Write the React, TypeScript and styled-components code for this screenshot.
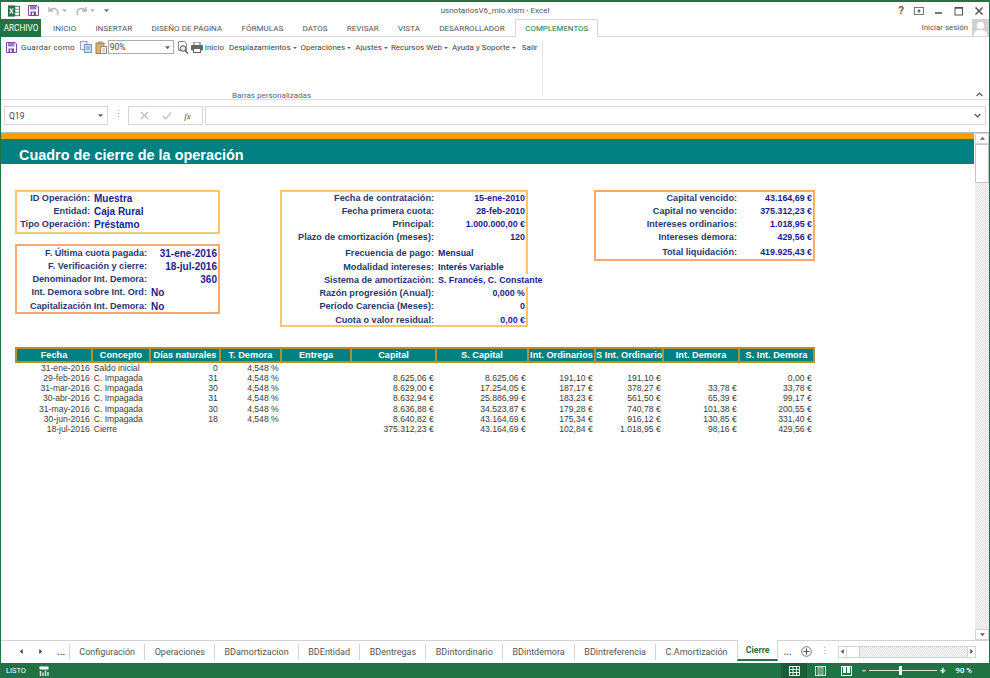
import React from "react";
import styled, { createGlobalStyle } from "styled-components";

const Global = createGlobalStyle`
  html, body { margin: 0; padding: 0; background: #fff; }
  body { width: 990px; height: 678px; overflow: hidden; }
  * { box-sizing: border-box; }
`;

const UI = `Roboto, "Open Sans", sans-serif`;
const CELL = `"Liberation Sans", Arial, sans-serif`;

const Window = styled.div`
  width: 990px; height: 678px; display: flex; flex-direction: column;
  border: 1px solid #217346; border-top-width: 2px; border-bottom: 0;
  background: #fff; font-family: ${UI}; color: #444; font-size: 8.5px;
`;
const TitleBar = styled.div`
  height: 17px; display: grid; grid-template-columns: 1fr auto 1fr; align-items: center;
`;
const Quick = styled.div`display: flex; align-items: center; padding-left: 6px;`;
const Title = styled.div`font-size: 8px; color: #555;`;
const WinCtl = styled.div`display: flex; justify-content: flex-end; gap: 10px; padding-right: 5px; align-items: center;`;

const Tabs = styled.div`
  height: 18px; display: flex; align-items: stretch; border-bottom: 1px solid #d8d8d8;
`;
const FileTab = styled.div`
  width: 40px; margin-bottom: -1px; background: #217346; color: #fff; font-size: 8.2px;
  display: flex; align-items: center; justify-content: center;
`;
const Tab = styled.div<{ $active?: boolean }>`
  display: flex; align-items: center; padding: 0 9.6px; font-size: 8.1px; white-space: nowrap; color: #555;
  ${p => p.$active && `
    width: 83px; margin-left: 1px; padding: 0; justify-content: center; font-size: 7.9px; color: #217346;
    border: 1px solid #d8d8d8; border-bottom: 0; background: #fff; margin-bottom: -1px;
  `}
`;
const TabList = styled.div`display: flex; padding-left: 2.4px; flex: 1;`;
const SignIn = styled.div`display: flex; align-items: center; gap: 4px; font-size: 7.9px; color: #555;`;

const Ribbon = styled.div`
  height: 63px; display: flex; border-bottom: 1px solid #dcdcdc; position: relative;
`;
const Group = styled.div`
  width: 542px; margin-top: 3px; margin-bottom: 3px; border-right: 1px solid #e4e4e4;
  display: flex; flex-direction: column; justify-content: space-between;
`;
const GroupRow = styled.div`display: flex; align-items: center; height: 14px; padding-left: 5px;`;
const GroupLabel = styled.div`text-align: center; font-size: 8px; color: #666; line-height: 10px; margin-bottom: -5px;`;
const RBtn = styled.span<{ $gap?: number; $wide?: boolean }>`
  display: inline-flex; align-items: center; white-space: nowrap; font-size: 8px; color: #444; flex: none;
  margin-left: ${p => p.$gap ?? 0}px;
  ${p => p.$wide && `letter-spacing: .25px;`}
`;
const Caret = styled.i`
  display: inline-block; width: 0; height: 0; margin-left: 2px; margin-top: 1px;
  border-left: 2px solid transparent; border-right: 2px solid transparent; border-top: 2.5px solid #666;
`;
const Combo = styled.div`
  width: 66px; height: 14px; flex: none; border: 1px solid #ababab; margin-left: 1px; display: flex;
  align-items: center; justify-content: space-between; padding: 0 3px 0 1px; font-size: 8.5px; color: #444;
`;
const Collapse = styled.div`position: absolute; right: 6px; bottom: 2px; line-height: 0;`;

const FormulaBar = styled.div`
  height: 32px; display: flex; align-items: flex-start; padding: 6px 3px 0 3px;
`;
const FBox = styled.div<{ $w?: number; $grow?: boolean }>`
  height: 19px; border: 1px solid #d6d6d6; background: #fff; display: flex; align-items: center;
  ${p => p.$w && `width: ${p.$w}px;`} ${p => p.$grow && `flex: 1; margin-left: 2px; justify-content: flex-end; padding-right: 4px;`}
`;
const NameText = styled.span`flex: 1; padding-left: 4px; font-size: 8.5px; color: #444;`;
const Dots = styled.div<{ $w?: number }>`width: ${p => p.$w ?? 20}px; flex: none; text-align: center; color: #999; font-size: 9px; line-height: 17px;`;
const FIcons = styled.div`display: flex; flex: 1; justify-content: space-around; align-items: center; padding: 0 5px;`;
const Fx = styled.span`font-family: "Liberation Serif", serif; font-style: italic; font-size: 9px; color: #555;`;

const SheetArea = styled.div`
  height: 509px; display: flex; border-top: 1px solid #b8b8b8; border-bottom: 1px solid #d4d4d4;
`;
const Sheet = styled.div`flex: 1; min-width: 0; overflow: hidden; font-family: ${CELL};`;
const OrangeBar = styled.div`height: 6px; background: #ff9c00;`;
const Banner = styled.div`
  height: 25px; background: #008080; color: #fff; font-weight: 700; font-size: 14.45px;
  display: flex; align-items: center; padding-left: 18px; padding-top: 7px;
`;
const Panels = styled.div`
  display: grid; grid-template-columns: 205px 248px 221px; column-gap: 60px;
  padding: 26px 0 0 14px; align-items: start;
`;
const LeftCol = styled.div`display: flex; flex-direction: column; gap: 10px;`;
const Box = styled.div<{ $tone: "light" | "salmon"; $cols: string; $shift?: boolean; $tall?: number; $row5?: number; $nudge?: boolean }>`
  border: 2px solid ${p => (p.$tone === "light" ? "#ffc66e" : "#ffa76c")};
  display: grid; grid-template-columns: ${p => p.$cols}; grid-auto-rows: 13.25px; align-items: end;
  ${p => p.$shift && `margin-left: 6px; width: 221px;`}
  ${p => p.$tall && `height: ${p.$tall}px; grid-template-rows: repeat(4, 13.2px) ${p.$row5}px;`}
  ${p => p.$nudge && `padding-top: 1px; height: 70px;`}
`;
const Label = styled.div`
  text-align: right; font-weight: 700; font-size: 9.15px; line-height: 13.3px; color: #1f3a72;
  white-space: nowrap; padding-right: 3px;
`;
const Value = styled.div<{ $left?: boolean; $over?: boolean; $big?: boolean }>`
  font-weight: 700; font-size: ${p => (p.$big ? "10px" : "8.9px")}; line-height: 13.3px; color: #1c1c8e; white-space: nowrap;
  text-align: ${p => (p.$left ? "left" : "right")};
  padding: ${p => (p.$left ? "0 0 0 1px" : "0 1px 0 0")};
  ${p => p.$over && `background: #fff; width: max-content; padding-right: 1px; margin-right: -30px;`}
`;
const Table = styled.div`margin: 20px 0 0 14px; width: 800px;`;
const HeadRow = styled.div`
  display: grid; grid-template-columns: 74px 58px 70px 61px 70px 85px 92px 67px 68px 76px 75px; height: 16px;
  border: 2px solid #b0912e; background: #008080;
`;
const HeadCell = styled.div`
  border-left: 2px solid #b0912e; color: #fff; font-weight: 700; font-size: 9.2px;
  text-align: center; line-height: 12px; white-space: nowrap; overflow: hidden;
  &:first-child { border-left: 0; }
`;
const BodyRow = styled.div`
  display: grid; grid-template-columns: 76px 58px 70px 61px 70px 85px 92px 67px 68px 76px 75px; height: 10.3px;
  &:nth-child(2) { margin-top: -0.5px; }
`;
const BodyCell = styled.div<{ $left?: boolean }>`
  font-size: 8.6px; line-height: 10.3px; color: #3a3a3a; white-space: nowrap;
  text-align: ${p => (p.$left ? "left" : "right")};
  padding: ${p => (p.$left ? "0 0 0 2.7px" : "0 1.3px 0 0")};
`;

const VScroll = styled.div`
  width: 14px; margin-left: 1px; display: flex; flex-direction: column;
  background: repeating-conic-gradient(#e2e2e2 0 25%, #f8f8f8 0 50%) 0 0 / 2px 2px;
`;
const ScrollBtn = styled.div`
  height: 11px; background: #fff; border: 1px solid #d4d4d4; display: flex; align-items: center; justify-content: center;
`;
const VThumb = styled.div`height: 39px; background: #fff; border: 1px solid #c4c4c4;`;
const Spacer = styled.div`flex: 1;`;

const SheetBar = styled.div`height: 22px; display: flex; align-items: stretch; padding-bottom: 1px;`;
const Nav = styled.div`display: flex; align-items: center; width: 68px; flex: none; padding-left: 18px; gap: 14px; color: #555;`;
const NavDots = styled.span`font-size: 9px; font-weight: 700; color: #555; letter-spacing: .2px;`;
const SheetTab = styled.div<{ $active?: boolean }>`
  display: flex; align-items: center; padding: 0 9.3px; font-size: 9px; white-space: nowrap; margin-top: 3px; flex: none;
  height: 16px; border-left: 1px solid #d4d4d4; color: #555;
  ${p => p.$active && `
    height: 21px; margin-top: -1px; border: 1px solid #d4d4d4; border-top: 0; border-bottom: 2px solid #217346;
    color: #217346; font-weight: 700; font-size: 8.7px; background: #fff; padding: 0 8px;
  `}
`;
const AfterTabs = styled.div`display: flex; align-items: center; gap: 8px; padding-left: 5px; flex: 1; min-width: 0;`;
const HScroll = styled.div`
  width: 138px; height: 12px; flex: none; margin-left: auto; display: flex; align-items: center; justify-content: space-between;
  margin-right: 14px;
  background: repeating-conic-gradient(#e2e2e2 0 25%, #f8f8f8 0 50%) 0 0 / 2px 2px; border: 1px solid #d4d4d4; position: relative;
`;
const HBtn = styled.div`width: 8px; height: 10px; background: #fff; display: flex; align-items: center; justify-content: center; border-right: 1px solid #d4d4d4;`;
const HBtnEnd = styled(HBtn)`border-right: 0; border-left: 1px solid #d4d4d4;`;
const HThumb = styled.div`position: absolute; left: 8px; top: 0; width: 13px; height: 10px; background: #fff; border-right: 1px solid #ccc;`;

const Status = styled.div`
  height: 15px; margin: 0 -1px; background: #217346; color: #fff; display: flex; align-items: center;
  font-size: 7.4px; padding-left: 6px;
`;
const StatusRight = styled.div`margin-left: auto; display: flex; align-items: center; height: 100%; padding-right: 18px;`;
const ViewBtn = styled.div<{ $on?: boolean }>`
  width: 26px; height: 100%; display: flex; align-items: center; justify-content: center;
  background: ${p => (p.$on ? "#1a5c38" : "transparent")};
`;
const Slider = styled.div`
  width: 68px; height: 1px; background: #cfe3d8; margin: 0 3px; position: relative;
`;
const SliderThumb = styled.div`position: absolute; left: 30px; top: -4px; width: 3px; height: 9px; background: #fff;`;
const Zoom = styled.span`margin-left: 10px; font-size: 7.8px; font-weight: 500;`;
const PlusMinus = styled.span`font-size: 10px; font-weight: 700; line-height: 1;`;
const Sp = styled.span<{ $w: number }>`display: inline-block; width: ${p => p.$w}px; flex: none;`;
const CtlHelp = styled.span`font-size: 10px; font-weight: 700; color: #555; font-family: ${CELL};`;

const ExcelLogo = () => (
  <svg width="12" height="12" viewBox="0 0 14 13" style={{ marginLeft: 1 }}>
    <rect x="5" y="1" width="8.5" height="11" fill="#fff" stroke="#217346" />
    <path d="M8 1v11M5 4.5h8.5M5 8h8.5" stroke="#217346" strokeWidth=".8" />
    <rect x="0" y="0" width="8" height="13" fill="#217346" />
    <path d="M2 3.5l4 6M6 3.5l-4 6" stroke="#fff" strokeWidth="1.3" />
  </svg>
);
const SaveIcon = ({ size = 11 }: { size?: number }) => (
  <svg width={size} height={size} viewBox="0 0 11 11" style={{ flex: "none" }}>
    <path d="M.5.5h8.5l1.5 1.5v8.5H.5z" fill="#fff" stroke="#7d4b9e" />
    <rect x="2" y="1" width="6.5" height="3.5" fill="#a17dbb" />
    <rect x="2.5" y="6.5" width="5.5" height="4" fill="#7d4b9e" />
    <rect x="4" y="7.5" width="1.6" height="2.4" fill="#fff" />
  </svg>
);
const Undo = ({ flip, color = "#b4b4b4" }: { flip?: boolean; color?: string }) => (
  <svg width="11" height="10" viewBox="0 0 11 10" style={flip ? { transform: "scaleX(-1)" } : undefined}>
    <path d="M1 1v4h4M1.3 5C3 2 7 1.7 9 4c1.4 1.7 1 3.6 0 5" fill="none" stroke={color} strokeWidth="1.3" />
  </svg>
);
const Tiny = ({ rot = 0, color = "#666", size = 5 }: { rot?: number; color?: string; size?: number }) => (
  <svg width={size} height={size} viewBox="0 0 6 6" style={{ transform: `rotate(${rot}deg)`, flex: "none" }}>
    <path d="M0 1.5h6L3 5z" fill={color} />
  </svg>
);
const Copy = () => (
  <svg width="12" height="12" viewBox="0 0 12 12" style={{ marginLeft: 5, flex: "none" }}>
    <rect x=".5" y=".5" width="6.5" height="8" fill="#eef2f7" stroke="#9aa7b5" />
    <rect x="4.5" y="3.5" width="7" height="8" fill="#cfe1f3" stroke="#6f94bd" />
    <path d="M6 6h4M6 8h4" stroke="#6f94bd" />
  </svg>
);
const Paste = () => (
  <svg width="12" height="13" viewBox="0 0 12 13" style={{ marginLeft: 3, flex: "none" }}>
    <rect x="1" y="2" width="8" height="10.5" fill="#e2b468" stroke="#a97c35" />
    <rect x="3" y="0.5" width="4" height="3" fill="#9a9a9a" />
    <rect x="5.5" y="5.5" width="6" height="7" fill="#fff" stroke="#8a8a8a" />
    <path d="M7 8h3M7 10h3" stroke="#e0a050" />
  </svg>
);
const Preview = () => (
  <svg width="12" height="13" viewBox="0 0 12 13" style={{ marginLeft: 3, flex: "none" }}>
    <path d="M1.5.5h6l2 2v7h-8z" fill="#fff" stroke="#8a8a8a" />
    <circle cx="6" cy="7.5" r="2.8" fill="#dfe9f3" stroke="#555" />
    <path d="M8 9.5l3 3" stroke="#555" strokeWidth="1.4" />
  </svg>
);
const Printer = () => (
  <svg width="12" height="11" viewBox="0 0 12 11" style={{ marginLeft: 2, flex: "none" }}>
    <rect x="3" y="0" width="6" height="4" fill="#fff" stroke="#666" />
    <rect x="0" y="3" width="12" height="5.5" rx="1" fill="#666" />
    <rect x="2.5" y="6.5" width="7" height="4" fill="#fff" stroke="#666" />
  </svg>
);
const Avatar = () => (
  <svg width="17" height="17" viewBox="0 0 17 17">
    <rect width="17" height="17" fill="#d2d2d2" />
    <circle cx="8.5" cy="6.5" r="3.6" fill="#fff" />
    <path d="M1.5 17c.5-4.5 3.5-6 7-6s6.5 1.5 7 6z" fill="#fff" />
  </svg>
);
const Chevron = ({ up }: { up?: boolean }) => (
  <svg width="7" height="5" viewBox="0 0 7 5"><path d={up ? "M.7 4L3.5 1.2 6.3 4" : "M.7 1l2.8 2.8L6.3 1"} fill="none" stroke="#555" strokeWidth="1.2" /></svg>
);

const tabs = ["INICIO", "INSERTAR", "DISEÑO DE PÁGINA", "FÓRMULAS", "DATOS", "REVISAR", "VISTA", "DESARROLLADOR"];
const sheets = ["Configuración", "Operaciones", "BDamortizacion", "BDEntidad", "BDentregas", "BDintordinario", "BDintdemora", "BDintreferencia", "C.Amortización"];
const heads = ["Fecha", "Concepto", "Días naturales", "T. Demora", "Entrega", "Capital", "S. Capital", "Int. Ordinarios", "S Int. Ordinario", "Int. Demora", "S. Int. Demora"];
const body = [
  ["31-ene-2016", "Saldo inicial", "0", "4,548 %", "", "", "", "", "", "", ""],
  ["29-feb-2016", "C. Impagada", "31", "4,548 %", "", "8.625,06 €", "8.625,06 €", "191,10 €", "191,10 €", "", "0,00 €"],
  ["31-mar-2016", "C. Impagada", "30", "4,548 %", "", "8.629,00 €", "17.254,05 €", "187,17 €", "378,27 €", "33,78 €", "33,78 €"],
  ["30-abr-2016", "C. Impagada", "31", "4,548 %", "", "8.632,94 €", "25.886,99 €", "183,23 €", "561,50 €", "65,39 €", "99,17 €"],
  ["31-may-2016", "C. Impagada", "30", "4,548 %", "", "8.636,88 €", "34.523,87 €", "179,28 €", "740,78 €", "101,38 €", "200,55 €"],
  ["30-jun-2016", "C. Impagada", "18", "4,548 %", "", "8.640,82 €", "43.164,69 €", "175,34 €", "916,12 €", "130,85 €", "331,40 €"],
  ["18-jul-2016", "Cierre", "", "", "", "375.312,23 €", "43.164,69 €", "102,84 €", "1.018,95 €", "98,16 €", "429,56 €"],
];

type F = [string, string, boolean?, boolean?];
const box1: F[] = [["ID Operación:", "Muestra", true], ["Entidad:", "Caja Rural", true], ["Tipo Operación:", "Préstamo", true]];
const box2: F[] = [["F. Última cuota pagada:", "31-ene-2016"], ["F. Verificación y cierre:", "18-jul-2016"], ["Denominador Int. Demora:", "360"], ["Int. Demora sobre Int. Ord:", "No", true], ["Capitalización Int. Demora:", "No", true]];
const box3: F[] = [["Fecha de contratación:", "15-ene-2010"], ["Fecha primera cuota:", "28-feb-2010"], ["Principal:", "1.000.000,00 €"], ["Plazo de cmortización (meses):", "120"], ["Frecuencia de pago:", "Mensual", true], ["Modalidad intereses:", "Interés Variable", true], ["Sistema de amortización:", "S. Francés, C. Constante", true, true], ["Razón progresión (Anual):", "0,000 %"], ["Período Carencia (Meses):", "0"], ["Cuota o valor residual:", "0,00 €"]];
const box4: F[] = [["Capital vencido:", "43.164,69 €"], ["Capital no vencido:", "375.312,23 €"], ["Intereses ordinarios:", "1.018,95 €"], ["Intereses demora:", "429,56 €"], ["Total liquidación:", "419.925,43 €"]];

const Fields = ({ items, big }: { items: F[]; big?: boolean }) => (
  <>
    {items.map(([l, v, left, over]) => (
      <React.Fragment key={l}>
        <Label>{l}</Label>
        <Value $left={left} $over={over} $big={big}>{v}</Value>
      </React.Fragment>
    ))}
  </>
);

export default function App() {
  return (
    <>
      <Global />
      <Window>
        <TitleBar>
          <Quick>
            <ExcelLogo />
            <Sp $w={8} />
            <SaveIcon />
            <Sp $w={9} />
            <Undo /><Sp $w={3} /><Tiny color="#bbb" />
            <Sp $w={9} />
            <Undo flip /><Sp $w={3} /><Tiny color="#bbb" />
            <Sp $w={9} />
            <Tiny color="#777" />
          </Quick>
          <Title>usnotariosV6_mio.xlsm - Excel</Title>
          <WinCtl>
            <CtlHelp>?</CtlHelp>
            <svg width="10" height="8" viewBox="0 0 10 8"><rect x=".5" y=".5" width="9" height="7" fill="none" stroke="#777" /><path d="M5 2l2 2.5H3zM4.5 4h1v2h-1z" fill="#555" /></svg>
            <svg width="10" height="10" viewBox="0 0 10 10"><path d="M1 7h7" stroke="#555" strokeWidth="1.6" /></svg>
            <svg width="10" height="10" viewBox="0 0 10 10"><rect x="1" y="1.5" width="7.5" height="7.5" fill="none" stroke="#555" /><path d="M1 2h7.5" stroke="#555" strokeWidth="1.5" /></svg>
            <svg width="10" height="10" viewBox="0 0 10 10"><path d="M1.5 1.5l7 7M8.5 1.5l-7 7" stroke="#555" strokeWidth="1.5" /></svg>
          </WinCtl>
        </TitleBar>
        <Tabs>
          <FileTab>ARCHIVO</FileTab>
          <TabList>
            {tabs.map(t => <Tab key={t}>{t}</Tab>)}
            <Tab $active>COMPLEMENTOS</Tab>
          </TabList>
          <SignIn>Iniciar sesión <Avatar /></SignIn>
        </Tabs>
        <Ribbon>
          <Group>
            <GroupRow>
              <SaveIcon />
              <RBtn $gap={4} $wide>Guardar como</RBtn>
              <Copy /><Paste />
              <Combo>90%<Tiny /></Combo>
              <Preview /><Printer />
              <RBtn $gap={2}>Inicio</RBtn>
              <RBtn $gap={5}>Desplazamientos<Caret /></RBtn>
              <RBtn $gap={4}>Operaciones<Caret /></RBtn>
              <RBtn $gap={4}>Ajustes<Caret /></RBtn>
              <RBtn $gap={3}>Recursos Web<Caret /></RBtn>
              <RBtn $gap={4}>Ayuda y Soporte<Caret /></RBtn>
              <RBtn $gap={6}>Salir</RBtn>
            </GroupRow>
            <GroupLabel>Barras personalizadas</GroupLabel>
          </Group>
          <Collapse><Chevron up /></Collapse>
        </Ribbon>
        <FormulaBar>
          <FBox $w={104}><NameText>Q19</NameText><Tiny /><Sp $w={4} /></FBox>
          <Dots>⋮</Dots>
          <FBox $w={75}>
            <FIcons>
              <svg width="9" height="9" viewBox="0 0 9 9"><path d="M1 1l7 7M8 1L1 8" stroke="#bbb" strokeWidth="1.2" /></svg>
              <svg width="10" height="9" viewBox="0 0 10 9"><path d="M1 5l3 3 5-7" fill="none" stroke="#bbb" strokeWidth="1.2" /></svg>
              <Fx>fx</Fx>
            </FIcons>
          </FBox>
          <FBox $grow><Chevron /></FBox>
        </FormulaBar>
        <SheetArea>
          <Sheet>
            <OrangeBar />
            <Banner>Cuadro de cierre de la operación</Banner>
            <Panels>
              <LeftCol>
                <Box $tone="light" $cols="76px 1fr"><Fields items={box1} big /></Box>
                <Box $tone="salmon" $cols="133px 1fr" $nudge><Fields items={box2} big /></Box>
              </LeftCol>
              <Box $tone="light" $cols="155px 1fr" $tall={137} $row5={16}><Fields items={box3} /></Box>
              <Box $tone="salmon" $cols="144px 1fr" $shift $tall={71} $row5={14.2}><Fields items={box4} /></Box>
            </Panels>
            <Table>
              <HeadRow>{heads.map(h => <HeadCell key={h}>{h}</HeadCell>)}</HeadRow>
              {body.map(r => (
                <BodyRow key={r[0]}>
                  {r.map((c, i) => <BodyCell key={i} $left={i === 1}>{c}</BodyCell>)}
                </BodyRow>
              ))}
            </Table>
          </Sheet>
          <VScroll>
            <ScrollBtn><Tiny rot={180} /></ScrollBtn>
            <VThumb />
            <Spacer />
            <ScrollBtn><Tiny /></ScrollBtn>
          </VScroll>
        </SheetArea>
        <SheetBar>
          <Nav>
            <Tiny rot={90} color="#444" /><Tiny rot={-90} color="#444" /><NavDots>...</NavDots>
          </Nav>
          {sheets.map(s => <SheetTab key={s}>{s}</SheetTab>)}
          <SheetTab $active>Cierre</SheetTab>
          <AfterTabs>
            <NavDots>...</NavDots>
            <svg width="11" height="11" viewBox="0 0 11 11" style={{ marginLeft: 1, flex: "none" }}><circle cx="5.5" cy="5.5" r="4.8" fill="none" stroke="#777" /><path d="M5.5 2.5v6M2.5 5.5h6" stroke="#555" strokeWidth="1.2" /></svg>
            <Dots $w={10}>⋮</Dots>
            <HScroll>
              <HBtn><Tiny rot={90} color="#555" /></HBtn>
              <HThumb />
              <HBtnEnd><Tiny rot={-90} color="#555" /></HBtnEnd>
            </HScroll>
          </AfterTabs>
        </SheetBar>
        <Status>
          LISTO
          <Sp $w={13} />
          <svg width="10" height="10" viewBox="0 0 10 10"><rect x=".5" y=".5" width="9" height="3" fill="#fff" /><path d="M1.5 10V5M4 10V6.5M6.5 10V4.5M9 10V6" stroke="#cfe3d8" strokeWidth="1.5" /></svg>
          <StatusRight>
            <ViewBtn $on>
              <svg width="11" height="10" viewBox="0 0 11 10"><path d="M.5.5h10v9H.5zM.5 3.5h10M.5 6.5h10M4 .5v9M7.5 .5v9" fill="none" stroke="#fff" strokeWidth=".9" /></svg>
            </ViewBtn>
            <ViewBtn>
              <svg width="11" height="10" viewBox="0 0 11 10"><rect x=".5" y=".5" width="10" height="9" fill="none" stroke="#cfe3d8" /><rect x="3" y="1" width="5" height="8" fill="#6c9f84" stroke="#cfe3d8" strokeWidth=".6" /></svg>
            </ViewBtn>
            <ViewBtn>
              <svg width="11" height="10" viewBox="0 0 11 10"><rect x=".5" y=".5" width="10" height="9" fill="none" stroke="#fff" /><rect x="2" y="1" width="3" height="6" fill="#fff" /><rect x="6" y="1" width="3" height="6" fill="#fff" /></svg>
            </ViewBtn>
            <Sp $w={3} />
            <PlusMinus>-</PlusMinus>
            <Slider><SliderThumb /></Slider>
            <PlusMinus>+</PlusMinus>
            <Zoom>90 %</Zoom>
          </StatusRight>
        </Status>
      </Window>
    </>
  );
}
